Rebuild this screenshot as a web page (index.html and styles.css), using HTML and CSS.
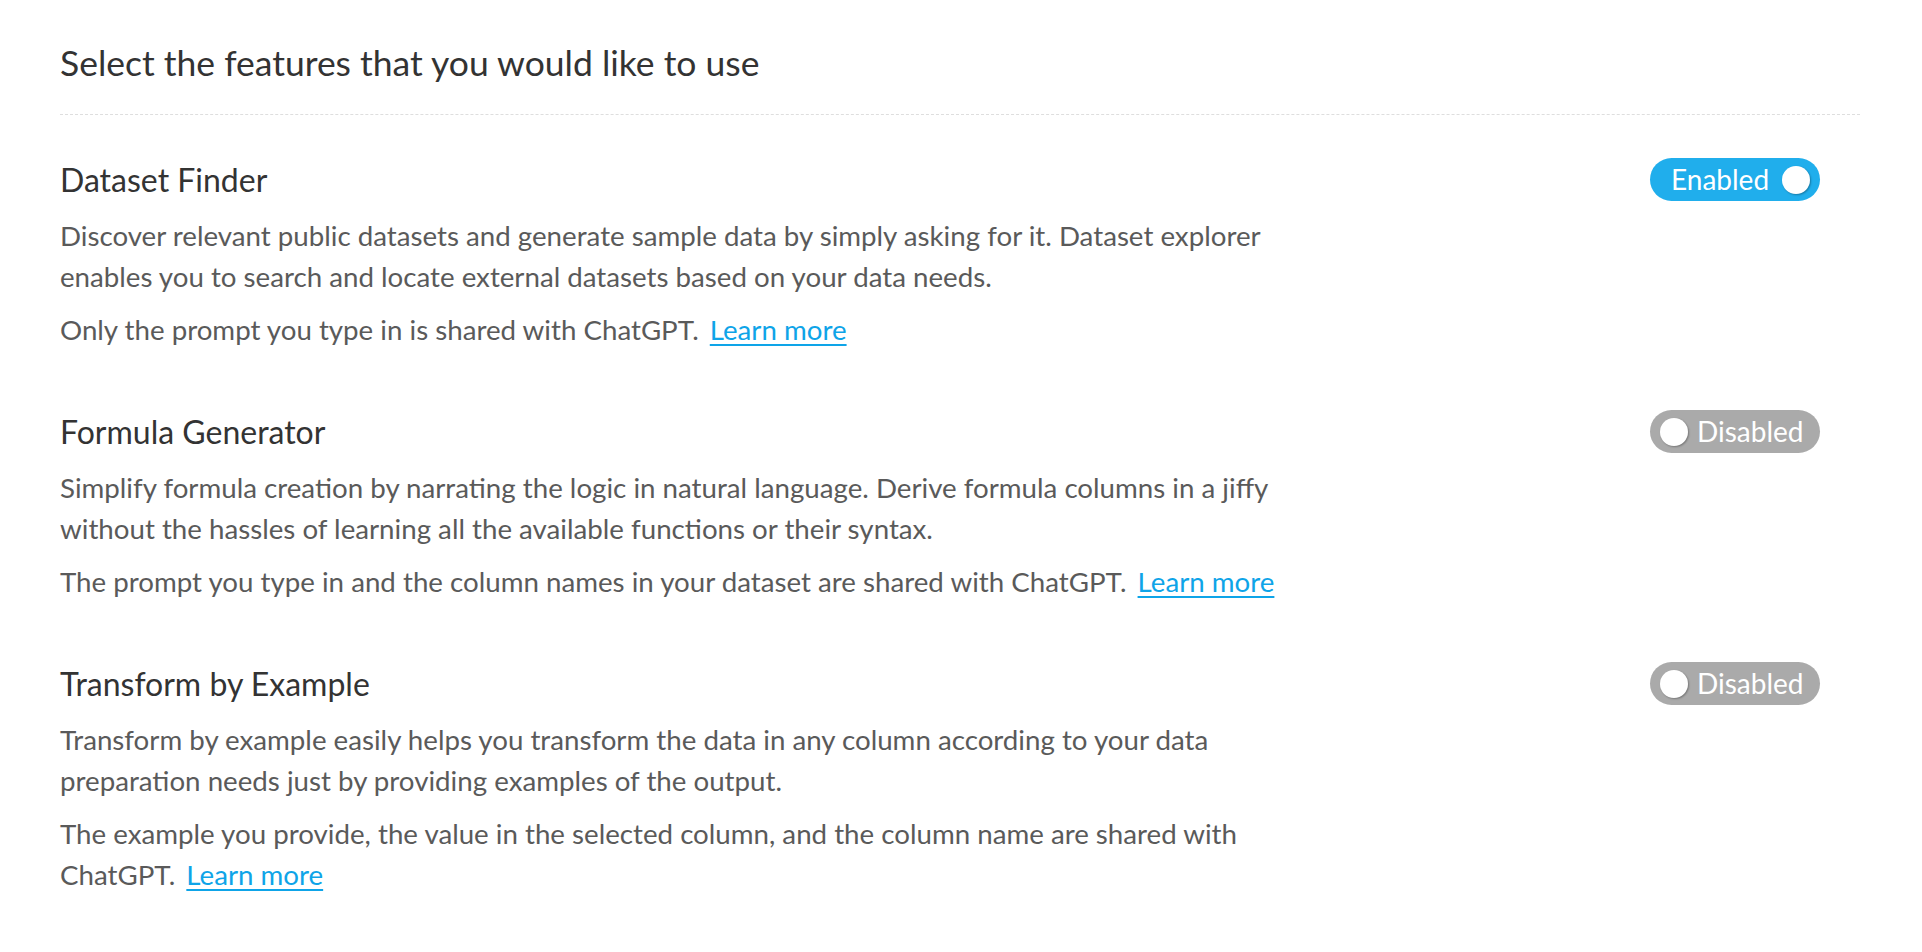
FILE: index.html
```html
<!DOCTYPE html>
<html lang="en">
<head>
<meta charset="utf-8">
<title>Features</title>
<link rel="stylesheet" href="styles.css">
</head>
<body>
<main class="page">
  <h1 class="title">Select the features that you would like to use</h1>
  <div class="divider"></div>

  <section class="feature">
    <div class="feature-head">
      <h2 class="feature-name">Dataset Finder</h2>
      <button class="toggle toggle-on" type="button"><span class="toggle-label">Enabled</span><span class="knob"></span></button>
    </div>
    <p class="desc">Discover relevant public datasets and generate sample data by simply asking for it. Dataset explorer enables you to search and locate external datasets based on your data needs.</p>
    <p class="note">Only the prompt you type in is shared with ChatGPT. <a class="link" href="#">Learn more</a></p>
  </section>

  <section class="feature">
    <div class="feature-head">
      <h2 class="feature-name">Formula Generator</h2>
      <button class="toggle toggle-off" type="button"><span class="knob"></span><span class="toggle-label">Disabled</span></button>
    </div>
    <p class="desc">Simplify formula creation by narrating the logic in natural language. Derive formula columns in a jiffy without the hassles of learning all the available functions or their syntax.</p>
    <p class="note">The prompt you type in and the column names in your dataset are shared with ChatGPT. <a class="link" href="#">Learn more</a></p>
  </section>

  <section class="feature">
    <div class="feature-head">
      <h2 class="feature-name">Transform by Example</h2>
      <button class="toggle toggle-off" type="button"><span class="knob"></span><span class="toggle-label">Disabled</span></button>
    </div>
    <p class="desc">Transform by example easily helps you transform the data in any column according to your data preparation needs just by providing examples of the output.</p>
    <p class="note">The example you provide, the value in the selected column, and the column name are shared with ChatGPT. <a class="link" href="#">Learn more</a></p>
  </section>
</main>
</body>
</html>
```

FILE: styles.css
```css
* { box-sizing: border-box; }

html, body {
  margin: 0;
  padding: 0;
  background: #ffffff;
}

body {
  font-family: Lato, "Open Sans", "Liberation Sans", sans-serif;
  color: #333333;
}

.page {
  padding: 41px 62px 0 60px;
}

.title {
  margin: 0;
  font-size: 35.5px;
  line-height: 44px;
  font-weight: 400;
  color: #333333;
}

.divider {
  margin-top: 29px;
  border-top: 1px dashed #dedede;
  height: 0;
}

.feature {
  padding-top: 43px;
}

.feature + .feature {
  padding-top: 60px;
}

.feature-head {
  display: flex;
  align-items: center;
  justify-content: space-between;
  padding-right: 40px;
}

.feature-name {
  margin: 0;
  font-size: 32px;
  line-height: 40px;
  font-weight: 400;
  color: #333333;
}

.desc,
.note {
  margin: 0;
  max-width: 1250px;
  font-size: 27.7px;
  line-height: 41px;
  color: #5a5a5a;
}

.desc {
  margin-top: 14px;
}

.note {
  margin-top: 12px;
}

.link {
  margin-left: 4px;
  color: #0ea4e8;
  text-decoration: underline;
  text-decoration-thickness: 2px;
  text-underline-offset: 4px;
}

.toggle {
  display: flex;
  align-items: center;
  width: 170px;
  height: 43px;
  border: 0;
  border-radius: 22px;
  padding: 0 10px;
  font-family: Lato, "Open Sans", "Liberation Sans", sans-serif;
  font-size: 28px;
  color: #ffffff;
  cursor: pointer;
}

.toggle-on {
  background: #20aeec;
  justify-content: space-between;
  padding-left: 21px;
}

.toggle-off {
  background: #aaaaaa;
  gap: 9px;
}

.toggle-label {
  line-height: 43px;
}

.knob {
  width: 28px;
  height: 28px;
  border-radius: 50%;
  background: #ffffff;
  box-shadow: 1px 1px 2px rgba(0, 0, 0, 0.3);
  flex: none;
}
```
